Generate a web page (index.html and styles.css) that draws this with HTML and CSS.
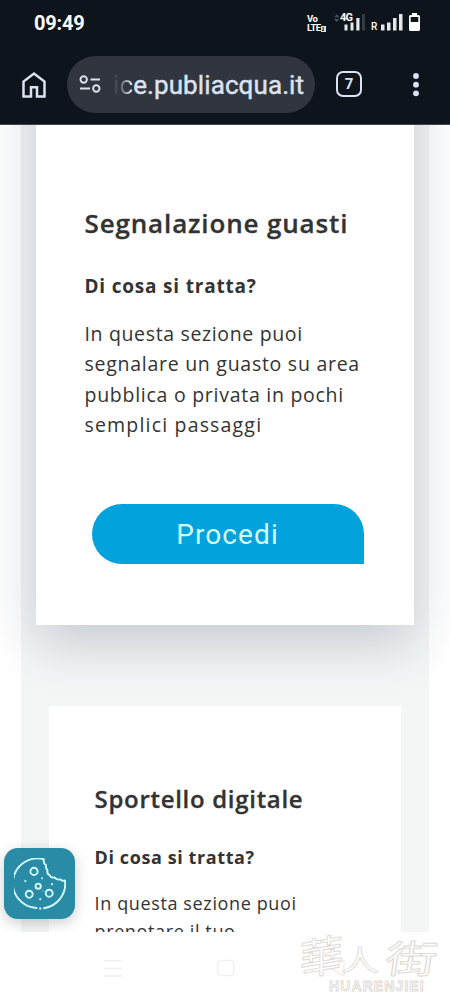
FILE: index.html
```html
<!DOCTYPE html>
<html lang="it">
<head>
<meta charset="utf-8">
<title>Publiacqua</title>
<link rel="stylesheet" href="styles.css">
</head>
<body>
<div class="phone">
  <header class="chrome">
    <div class="status">
      <span class="clock">09:49</span>
      <div class="indicators">
        <div class="volte"><span>Vo</span><span>LTE<b>2</b></span></div>
        <div class="network">
          <svg class="signal-4g" viewBox="0 0 33 20"><path d="M0 4.200l2.700-3 2.700 3zM0 6l2.700 3L5.400 6z" fill="#4a5058"/><path d="M10.500 11.500h3v6h-3zM16.500 9.500h3v8h-3zM22.300 5h3.200v12.500h-3.200z" fill="#e6e7e9"/><path d="M28 1h3v16.500h-3z" fill="#353b43"/></svg>
          <span class="gen">4G</span>
        </div>
        <span class="roam">R</span>
        <svg class="signal" viewBox="0 0 22 18"><path d="M0 11.500h3.500v6H0zM6 9.500h3.500v8H6zM12 5h3.500v12.500h-3.500zM18 1h3.500v16.500h-3.500z" fill="#e6e7e9"/></svg>
        <svg class="battery" viewBox="0 0 11 19"><path d="M3 0h5v2h1.500Q11 2 11 3.500v13Q11 18 9.500 18h-8Q0 18 0 16.500v-13Q0 2 1.500 2H3z" fill="#fff"/><path d="M1.700 4h7.600v5H1.700z" fill="#0d141c"/></svg>
      </div>
    </div>
    <div class="toolbar">
      <svg class="home" viewBox="0 0 24 26"><path d="M1.500 24.500V9.500L12 1.600l10.500 7.900v15h-7.500v-9.200H9v9.200z" fill="none" stroke="#dce2f1" stroke-width="2.500"/></svg>
      <div class="address">
        <svg class="tune" viewBox="0 0 22 19"><g fill="none" stroke="#dce2f1" stroke-width="1.900"><circle cx="4.700" cy="4.500" r="3.200"/><circle cx="17.300" cy="13.500" r="3.200"/><path d="M11.500 4.500h9.500M1 13.500h10"/></g></svg>
        <span class="url"><span class="fade">ic</span>e.publiacqua.it</span>
      </div>
      <div class="tabs">7</div>
      <svg class="more" viewBox="0 0 6 24"><g fill="#dce2f1"><circle cx="3" cy="3" r="2.900"/><circle cx="3" cy="11.700" r="2.900"/><circle cx="3" cy="20.300" r="2.900"/></g></svg>
    </div>
  </header>

  <main class="viewport">
    <div class="band">
      <section class="card card-active">
        <h2>Segnalazione guasti</h2>
        <h3>Di cosa si tratta?</h3>
        <p class="copy">In questa sezione puoi<br><span class="loose">segnalare un guasto su area</span><br><span class="loose">pubblica o privata in pochi</span><br><span class="looser">semplici passaggi</span></p>
        <a class="button">Procedi</a>
      </section>
      <section class="card card-next">
        <h2>Sportello digitale</h2>
        <h3>Di cosa si tratta?</h3>
        <p class="copy">In questa sezione puoi<br>prenotare il tuo</p>
      </section>
    </div>
  </main>

  <div class="cookie">
    <svg viewBox="0 0 52 52"><g fill="none" stroke="#d3fbff" stroke-width="1.900" stroke-linejoin="round" stroke-linecap="round"><path d="M22.500 50A24.800 24.800 0 1 1 29.800 1.200Q29 5 32 7.200Q31.500 10 33.500 12.500Q32.800 16 35.500 16.800Q36.700 20.300 40.500 19.500Q43.500 22.500 46.500 21.300Q48.500 23.500 51 22.500A24.800 24.800 0 0 1 30 50.200"/><circle cx="20" cy="13.400" r="3.600"/><circle cx="24.200" cy="28.200" r="2.600"/><circle cx="15.200" cy="36.200" r="3.500"/><circle cx="35.200" cy="35.200" r="3.500"/></g><g fill="#bff2f7"><circle cx="11.300" cy="23.200" r="1.100"/><circle cx="28" cy="20.300" r="1"/><circle cx="38" cy="26.200" r="1.100"/><circle cx="26.200" cy="41.200" r="1.100"/><circle cx="26.200" cy="50.500" r="1.200"/><circle cx="29" cy="33" r=".6"/></g></svg>
  </div>

  <footer class="navbar">
    <svg class="recent" viewBox="0 0 20 18"><path d="M1 2h18M1 9.500h18M1 17h18" stroke="#f0f0f0" stroke-width="1.500"/></svg>
    <svg class="nav-home" viewBox="0 0 20 18"><rect x="1.500" y="1.500" width="16" height="15" rx="3" fill="none" stroke="#f2f2f2" stroke-width="1.500"/></svg>
    <svg class="back" viewBox="0 0 18 18"><path d="M16 1.500v15L2 9z" fill="none" stroke="#efefef" stroke-width="1.500"/></svg>
  </footer>
  <div class="watermark">
    <div class="hanzi"><span class="w1">華</span><span class="w2">人</span><span class="w3">街</span></div>
    <div class="latin">HUARENJIEI</div>
  </div>
</div>
</body>
</html>
```
FILE: styles.css
```css
* { box-sizing: border-box; }
body { margin: 0; background: #fff; font-family: "Open Sans", sans-serif; color: #333; }
svg { display: block; flex: none; }
.phone { position: relative; width: 450px; height: 1000px; overflow: hidden; display: flex; flex-direction: column; }
.chrome { flex: none; height: 125px; background: #0d141c; border-bottom: 1px solid #41464c; font-family: Roboto, sans-serif; }
.status { height: 45px; padding: 0 30px 0 34px; display: flex; justify-content: space-between; align-items: center; }
.clock { color: #fff; font-size: 20px; font-weight: 700; letter-spacing: -.2px; line-height: 44px; }
.indicators { height: 20px; display: flex; align-items: flex-start; color: #fff; }
.volte { width: 18px; margin: 1px 9px 0 1px; font-size: 9.500px; line-height: 9px; font-weight: 700; letter-spacing: -.6px; display: flex; flex-direction: column; }
.volte span { white-space: nowrap; height: 9px; }
.volte b { display: inline-block; width: 5px; height: 6px; line-height: 6px; font-size: 5px; background: #e6e7e9; color: #0d141c; text-align: center; letter-spacing: 0; }
.network { position: relative; width: 33px; margin-right: 4px; }
.signal-4g { width: 33px; height: 20px; }
.gen { position: absolute; left: 6px; top: -1px; font-size: 11px; line-height: 11px; font-weight: 700; letter-spacing: -.8px; }
.roam { width: 10px; font-size: 10px; font-weight: 500; line-height: 12px; padding-top: 8px; }
.signal { width: 22px; height: 18px; margin-right: 6px; }
.battery { width: 11px; height: 19px; }
.toolbar { height: 79px; padding: 11px 28px 0 22px; display: flex; align-items: flex-start; }
.home { width: 24px; height: 26px; margin: 16px 21px 0 0; }
.address { width: 248px; height: 57px; border-radius: 29px; background: #30353f; padding: 0 0 0 12px; display: flex; align-items: center; }
.tune { width: 22px; height: 19px; margin-right: 12px; }
.url { color: #dce2f1; font-size: 26px; font-weight: 400; -webkit-text-stroke: .45px #dce2f1; line-height: 56px; letter-spacing: .1px; white-space: nowrap; }
.fade { background: linear-gradient(90deg, #464c57 0 30%, #dce2f1 90%); background-clip: text; -webkit-background-clip: text; -webkit-text-fill-color: transparent; -webkit-text-stroke: 0; }
.tabs { width: 26px; height: 26px; margin: 15px 0 0 21px; border: 2.500px solid #dce2f1; border-radius: 7px; color: #dce2f1; font-size: 15px; font-weight: 700; line-height: 22px; text-align: center; }
.more { width: 6px; height: 24px; margin: 17px 3px 0 auto; }
.viewport { flex: none; height: 807px; overflow: hidden; padding: 0 21px; }
.band { height: 900px; background: #f4f6f6; display: flex; flex-direction: column; align-items: center; gap: 81px; padding-right: 1px; }
.card { position: relative; background: #fff; flex: none; white-space: nowrap; }
.card h2, .card h3, .card p { margin: 0; }
.card-active { width: 378px; height: 620px; margin-top: -120px; padding: 198px 49px 0; box-shadow: 0 18px 50px rgba(25, 42, 75, .21); }
.card-active h2 { font-size: 26px; line-height: 40px; font-weight: 600; letter-spacing: .85px; -webkit-text-stroke: .3px #333; }
.card-active h3 { font-size: 19px; line-height: 30px; font-weight: 700; margin-top: 28px; letter-spacing: .8px; }
.card-active .copy { font-size: 19.500px; line-height: 30.400px; margin-top: 18px; letter-spacing: .65px; }
.loose { letter-spacing: .73px; }
.looser { letter-spacing: 1.180px; }
.button { display: block; width: 272px; height: 60px; margin: 63px 0 0 7px; background: #02a3dc; border-radius: 30px 30px 0 30px; color: #d5fbff; font-family: Roboto, sans-serif; font-weight: 400; font-size: 28px; line-height: 61px; letter-spacing: 1.100px; text-align: center; }
.card-next { width: 352px; height: 300px; padding: 75px 46px 0; }
.card-next h2 { font-size: 24px; line-height: 36px; font-weight: 600; letter-spacing: .7px; -webkit-text-stroke: .3px #333; }
.card-next h3 { font-size: 18px; line-height: 28px; font-weight: 700; margin-top: 26px; letter-spacing: .6px; }
.card-next .copy { font-size: 18px; line-height: 28px; margin-top: 18px; letter-spacing: .63px; }
.cookie { position: absolute; left: 4px; top: 848px; width: 71px; height: 71px; border-radius: 14px; background: #298ba5; box-shadow: 0 4px 14px rgba(0, 0, 0, .2); padding: 9.500px; }
.cookie svg { width: 52px; height: 52px; }
.navbar { flex: 1; background: #fff; position: relative; z-index: 1; padding: 27px 104px 0 103px; display: flex; justify-content: space-between; }
.recent, .nav-home { width: 20px; height: 18px; }
.back { width: 18px; height: 18px; }
.watermark { position: absolute; z-index: 2; left: 300px; top: 931px; width: 146px; height: 64px; color: #fff; -webkit-text-stroke: 1px #e0dbd4; }
.hanzi { display: flex; height: 47px; font-family: "Noto Sans CJK TC", sans-serif; font-weight: 400; line-height: 47px; }
.hanzi span { display: block; }
.w1 { width: 41px; font-size: 43px; transform: skewX(-10deg) rotate(-10deg); }
.w2 { width: 42px; font-size: 38px; transform: translateY(4px) scaleY(.75); }
.w3 { width: 56px; font-size: 38px; transform: translate(13px, 2px) skewX(-8deg) scaleX(1.35); }
.latin { padding-left: 29px; font-family: "Liberation Sans", sans-serif; font-weight: 700; font-size: 14px; line-height: 17px; letter-spacing: 1.100px; }
```
